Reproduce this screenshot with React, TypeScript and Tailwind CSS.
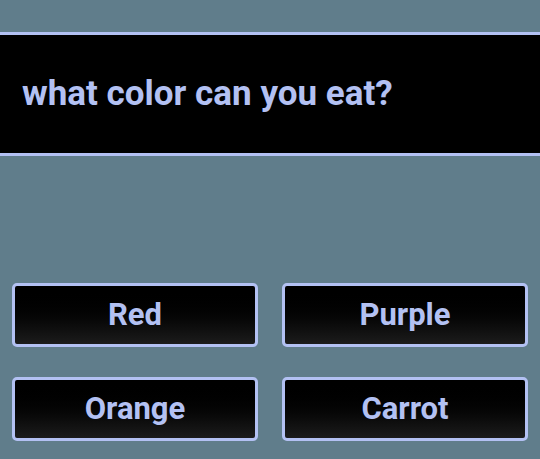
import React from 'react';

const answers = ['Red', 'Purple', 'Orange', 'Carrot'];

const AnswerButton = ({ label }: { label: string }) => (
  <button className="h-[64px] rounded-[5px] border-[3px] border-[#b3c1f3] bg-gradient-to-b from-[#000000] to-[#1c1c1c] text-[31px] font-bold text-[#b3c1f3]">
    {label}
  </button>
);

export default function App() {
  return (
    <div
      className="h-[459px] w-full overflow-hidden bg-[#607d8b] pt-[32px]"
      style={{ fontFamily: 'Roboto, "Liberation Sans", sans-serif' }}
    >
      {/* Question */}
      <div className="flex h-[124px] items-center border-y-[3px] border-[#b3c1f3] bg-black pl-[22px]">
        <h1 className="text-[35px] font-bold text-[#b3c1f3]">what color can you eat?</h1>
      </div>

      {/* Answers */}
      <div className="mt-[127px] grid grid-cols-2 gap-x-6 gap-y-[30px] px-3">
        {answers.map(a => (
          <AnswerButton key={a} label={a} />
        ))}
      </div>
    </div>
  );
}
